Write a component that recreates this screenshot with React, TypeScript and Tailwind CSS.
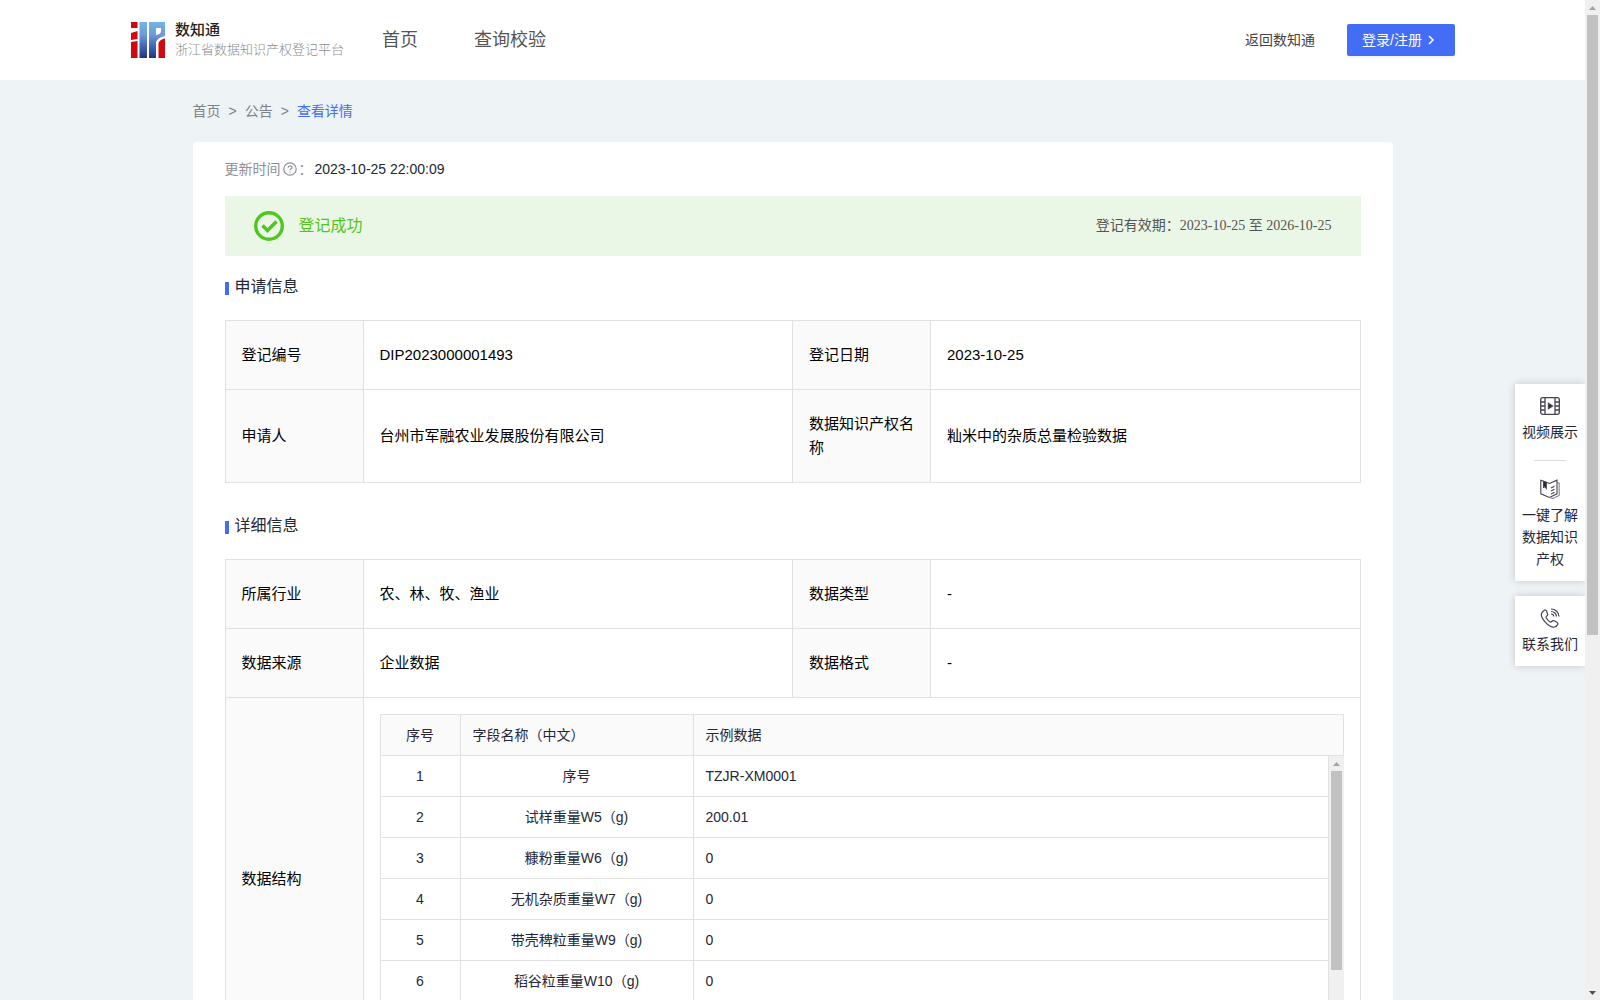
import React, { useState } from "react";

interface FieldRow {
  name: string;
  sample: string;
}

const fieldRows: FieldRow[] = [
  { name: "序号", sample: "TZJR-XM0001" },
  { name: "试样重量W5（g)", sample: "200.01" },
  { name: "糠粉重量W6（g)", sample: "0" },
  { name: "无机杂质重量W7（g)", sample: "0" },
  { name: "带壳稗粒重量W9（g)", sample: "0" },
  { name: "稻谷粒重量W10（g)", sample: "0" },
];

const Logo: React.FC = () => (
  <svg width="34" height="36" viewBox="0 0 34 36" aria-hidden="true">
    <defs>
      <linearGradient id="logoBlue" x1="0" y1="0" x2="0" y2="36" gradientUnits="userSpaceOnUse">
        <stop offset="0" stopColor="#74b4ea" />
        <stop offset="0.35" stopColor="#6c9bd8" />
        <stop offset="0.75" stopColor="#3a5aa6" />
        <stop offset="1" stopColor="#24357f" />
      </linearGradient>
    </defs>
    <path d="M0 0h6.5v6H0zM0 11l6.500-2v8L0 18zM0 20l6.500-1v17H0z" fill="#d2080c" />
    <path d="M8.500 0h7.500v36H8.500z" fill="url(#logoBlue)" />
    <path d="M18 0h16v14c-5 1-8 3-9 6v16h-7zM25 6v7c3-.5 5-1.500 5-4V6z" fill="url(#logoBlue)" fillRule="evenodd" />
    <path d="M27.500 21c1-2.500 3.500-4 6.500-4.500V36h-6.500z" fill="#d2080c" />
  </svg>
);

const Header: React.FC = () => (
  <header className="flex h-20 items-center bg-white pr-[130px] pl-[131px]">
    <a href="#" className="flex items-center gap-[10px]">
      <Logo />
      <span className="flex w-[170px] flex-col">
        <span className="text-[15px] leading-5 font-medium text-[#222]">数知通</span>
        <span className="text-[13px] leading-5 font-light whitespace-nowrap text-[#8c8c8c]">
          浙江省数据知识产权登记平台
        </span>
      </span>
    </a>
    <nav className="ml-[37px] flex gap-14 text-lg leading-6 text-[#555]">
      <a href="#">首页</a>
      <a href="#">查询校验</a>
    </nav>
    <div className="ml-auto flex items-center gap-8 text-sm">
      <a href="#" className="text-[#444]">
        返回数知通
      </a>
      <button
        type="button"
        className="flex h-8 w-[108px] items-center gap-[6px] rounded-[2px] bg-[#446df6] pl-[15px] text-white shadow-[0_2px_0_rgba(0,0,0,0.04)]"
      >
        登录/注册
        <svg width="6" height="10" viewBox="0 0 6 10" aria-hidden="true">
          <path d="M1 1l4 4-4 4" fill="none" stroke="currentColor" strokeWidth="1.5" />
        </svg>
      </button>
    </div>
  </header>
);

const SectionTitle: React.FC<{ children: React.ReactNode }> = ({ children }) => (
  <h2 className="flex items-center gap-[6px] text-base leading-6 text-[#252736]">
    <span className="mt-[2px] h-[13px] w-1 bg-[#446df6]" />
    {children}
  </h2>
);

const Columns: React.FC = () => (
  <colgroup>
    <col className="w-[138px]" />
    <col />
    <col className="w-[138px]" />
    <col />
  </colgroup>
);

const Label: React.FC<{ children: React.ReactNode }> = ({ children }) => (
  <th scope="row" className="border border-[#e1e1e1] bg-[#fafafa] px-4 py-[22px] text-left font-normal">
    {children}
  </th>
);

const Value: React.FC<{ children: React.ReactNode }> = ({ children }) => (
  <td className="border border-[#e1e1e1] px-4 py-[22px]">{children}</td>
);

const ScrollArrow: React.FC<{ down?: boolean }> = ({ down }) => (
  <svg width="15" height="15" viewBox="0 0 15 15" className="shrink-0" aria-hidden="true">
    <path d={down ? "M4 6h7l-3.500 4z" : "M4 10h7L7.500 6z"} fill={down ? "#505050" : "#a3a3a3"} />
  </svg>
);

const FieldTable: React.FC = () => (
  <div className="flex h-[329px] flex-col overflow-hidden text-sm text-[#252736]">
    <table className="w-full table-fixed border-collapse">
      <colgroup>
        <col className="w-20" />
        <col className="w-[233px]" />
        <col />
      </colgroup>
      <thead>
        <tr className="h-[41px] bg-[#fafafa]">
          <th className="border border-[#e1e1e1] font-normal">序号</th>
          <th className="border border-[#e1e1e1] px-3 text-left font-normal">字段名称（中文）</th>
          <th className="border border-[#e1e1e1] px-3 text-left font-normal">示例数据</th>
        </tr>
      </thead>
    </table>
    <div className="flex min-h-0 flex-1">
      <div className="min-w-0 flex-1 overflow-hidden">
        <table className="w-full table-fixed border-collapse">
          <colgroup>
            <col className="w-20" />
            <col className="w-[233px]" />
            <col />
          </colgroup>
          <tbody>
            {fieldRows.map((row, index) => (
              <tr key={row.name} className="h-[41px] first:h-10">
                <td className="border border-t-0 border-[#e1e1e1] text-center">{index + 1}</td>
                <td className="border border-t-0 border-[#e1e1e1] text-center">{row.name}</td>
                <td className="border border-t-0 border-[#e1e1e1] px-3">{row.sample}</td>
              </tr>
            ))}
          </tbody>
        </table>
      </div>
      <div className="flex w-[15px] flex-col items-center bg-[#f0f0f0]">
        <ScrollArrow />
        <span className="h-[199px] w-[11px] bg-[#c1c1c1]" />
      </div>
    </div>
  </div>
);

const VideoIcon: React.FC = () => (
  <svg width="20" height="20" viewBox="0 0 20 20" fill="none" stroke="#44454f" strokeWidth="1.3" aria-hidden="true">
    <rect x="0.700" y="1.700" width="18.600" height="16.600" rx="2" />
    <path d="M5 2v16M15 2v16M1 6h4M1 10h4M1 14h4M15 6h4M15 10h4M15 14h4" />
    <path d="M8.500 7.500v5l4-2.500z" fill="#252736" />
  </svg>
);

const BookIcon: React.FC = () => (
  <svg width="20" height="20" viewBox="0 0 20 20" fill="none" stroke="#44454f" strokeWidth="1.100" aria-hidden="true">
    <path d="M9.500 4.500L.8 1.200v13.600l8.700 3.700 7.500-3.700V1.200z" />
    <path d="M17 3.200l2.200 1v12.300l-6.500 3-3.200-1" stroke="#85868d" />
    <path d="M11 9l3.500-1.700M11 12l3.500-1.700M11 15l3.500-1.700" />
    <path d="M3.500 2.300l2.800 1.100v6L4.900 7.700l-1.400.7z" fill="#252736" />
  </svg>
);

const PhoneIcon: React.FC = () => (
  <svg width="20" height="20" viewBox="0 0 20 20" fill="none" stroke="#44454f" strokeWidth="1.200" aria-hidden="true">
    <path d="M4.200 2.300L2 4.500c-3 4.500 7 15.500 12.500 14.500 1.500-.3 2.800-1.500 3.300-2.800.2-.8-.1-1.500-.8-2l-2.800-1.500c-1-.4-1.800 0-2.500.8-.6.7-1.200.8-2 .3-1.500-1-2.700-2.300-3.500-4-.3-.7 0-1.300.7-1.900.8-.6 1-1.300.6-2.200L6.400 2.800c-.5-.9-1.500-1.100-2.200-.5z" />
    <path d="M11 1c4.500 0 8 3.500 8 7.500M11 3.500c3 0 5.500 2.200 5.500 5M11 6c1.800 0 2.800 1 2.800 2.500" />
  </svg>
);

const SideBar: React.FC = () => (
  <aside className="absolute top-[384px] right-0 flex w-[70px] flex-col gap-[15px] text-sm leading-[22px] text-[#252736]">
    <div className="flex flex-col items-center bg-white pt-3 pb-[11px] shadow-[0_0_8px_rgba(0,0,0,0.18)]">
      <button type="button" className="flex flex-col items-center gap-[5px]">
        <VideoIcon />
        视频展示
      </button>
      <hr className="mt-[17px] mb-[18px] w-8 border-[#dcdcdc]" />
      <button type="button" className="flex w-14 flex-col items-center gap-[5px]">
        <BookIcon />
        一键了解数据知识产权
      </button>
    </div>
    <div className="flex flex-col items-center bg-white pt-3 pb-[11px] shadow-[0_0_8px_rgba(0,0,0,0.18)]">
      <button type="button" className="flex flex-col items-center gap-[5px]">
        <PhoneIcon />
        联系我们
      </button>
    </div>
  </aside>
);

const App: React.FC = () => {
  const [showTip, setShowTip] = useState(false);

  return (
    <div className="relative flex h-screen overflow-hidden bg-[#eef3f6] font-['Liberation_Sans','Noto_Sans_CJK_SC',sans-serif]">
      <div className="relative min-w-0 flex-1 overflow-hidden">
        <Header />
        <main className="mx-auto w-full max-w-[1200px]">
          <nav className="flex gap-2 pt-5 pb-5 text-sm leading-[22px] text-[#7f8187]">
            <a href="#">首页</a>
            <span>&gt;</span>
            <a href="#">公告</a>
            <span>&gt;</span>
            <a href="#" className="text-[#446df6]">
              查看详情
            </a>
          </nav>
          <div className="rounded-[4px] bg-white px-8 pt-[15px] pb-8">
            <div className="flex items-center text-sm leading-6">
              <span className="text-[#8f9096]">更新时间</span>
              <button
                type="button"
                aria-label="更新时间说明"
                title={showTip ? "数据更新时间" : undefined}
                onMouseEnter={() => setShowTip(true)}
                onMouseLeave={() => setShowTip(false)}
                className="mx-[2px]"
              >
                <svg width="14" height="14" viewBox="0 0 14 14" fill="none" stroke="#8f9096" strokeWidth="1.200">
                  <circle cx="7" cy="7" r="6.200" />
                  <path d="M5.100 5.700c0-2.500 3.900-2.500 3.900-.2 0 1.300-2 1.200-2 2.800M7 9.400v1.200" />
                </svg>
              </button>
              <span className="w-4 text-[#8f9096]">：</span>
              <span className="text-[#252736]">2023-10-25 22:00:09</span>
            </div>

            <div className="mt-[15px] flex h-[60px] items-center bg-[#ebf7e6] pr-[29px] pl-[29px]">
              <svg width="30" height="30" viewBox="0 0 30 30" fill="none" stroke="#4fc71e" aria-hidden="true">
                <circle cx="15" cy="15" r="13.300" strokeWidth="3.400" />
                <path d="M8.500 14.500l5 5 9-9" strokeWidth="3.600" />
              </svg>
              <span className="ml-[15px] text-base text-[#52c41a]">登记成功</span>
              <span className="ml-auto font-['Liberation_Serif','Noto_Sans_CJK_SC',serif] text-sm text-[#555]">
                登记有效期：2023-10-25 至 2026-10-25
              </span>
            </div>

            <section className="pt-[19px]">
              <SectionTitle>申请信息</SectionTitle>
              <table className="mt-[21px] w-full table-fixed border-collapse text-[15px] leading-6 text-black">
                <Columns />
                <tbody>
                  <tr>
                    <Label>登记编号</Label>
                    <Value>DIP2023000001493</Value>
                    <Label>登记日期</Label>
                    <Value>2023-10-25</Value>
                  </tr>
                  <tr>
                    <Label>申请人</Label>
                    <Value>台州市军融农业发展股份有限公司</Value>
                    <Label>数据知识产权名称</Label>
                    <Value>籼米中的杂质总量检验数据</Value>
                  </tr>
                </tbody>
              </table>
            </section>

            <section className="pt-[31px]">
              <SectionTitle>详细信息</SectionTitle>
              <table className="mt-[21px] w-full table-fixed border-collapse text-[15px] leading-6 text-black">
                <Columns />
                <tbody>
                  <tr>
                    <Label>所属行业</Label>
                    <Value>农、林、牧、渔业</Value>
                    <Label>数据类型</Label>
                    <Value>-</Value>
                  </tr>
                  <tr>
                    <Label>数据来源</Label>
                    <Value>企业数据</Value>
                    <Label>数据格式</Label>
                    <Value>-</Value>
                  </tr>
                  <tr>
                    <Label>数据结构</Label>
                    <td colSpan={3} className="border border-[#e1e1e1] p-4">
                      <FieldTable />
                    </td>
                  </tr>
                </tbody>
              </table>
            </section>
          </div>
        </main>
        <SideBar />
      </div>

      {/* page scrollbar */}
      <div className="flex w-[15px] shrink-0 flex-col items-center bg-[#f0f0f0]">
        <ScrollArrow />
        <span className="h-[62%] w-[11px] bg-[#c1c1c1]" />
        <span className="mt-auto">
          <ScrollArrow down />
        </span>
      </div>
    </div>
  );
};

export default App;
